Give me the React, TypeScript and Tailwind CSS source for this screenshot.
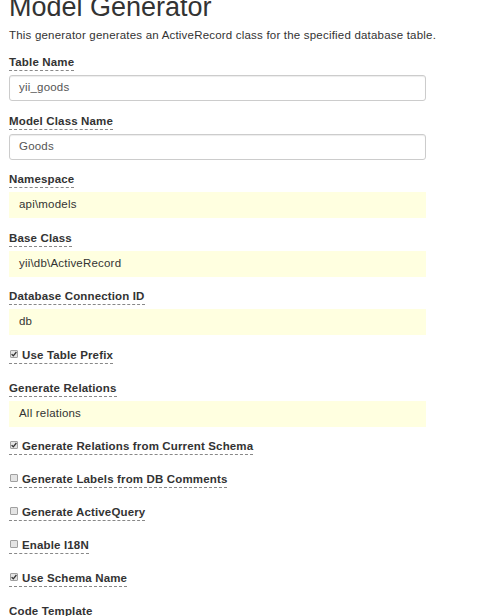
const font = { fontFamily: '"Liberation Sans", Arial, sans-serif' };

type Field =
  | { kind: "input"; label: string; value: string }
  | { kind: "sticky"; label: string; value: string }
  | { kind: "check"; label: string; checked: boolean };

const fields: Field[] = [
  { kind: "input", label: "Table Name", value: "yii_goods" },
  { kind: "input", label: "Model Class Name", value: "Goods" },
  { kind: "sticky", label: "Namespace", value: "api\\models" },
  { kind: "sticky", label: "Base Class", value: "yii\\db\\ActiveRecord" },
  { kind: "sticky", label: "Database Connection ID", value: "db" },
  { kind: "check", label: "Use Table Prefix", checked: true },
  { kind: "sticky", label: "Generate Relations", value: "All relations" },
  { kind: "check", label: "Generate Relations from Current Schema", checked: true },
  { kind: "check", label: "Generate Labels from DB Comments", checked: false },
  { kind: "check", label: "Generate ActiveQuery", checked: false },
  { kind: "check", label: "Enable I18N", checked: false },
  { kind: "check", label: "Use Schema Name", checked: true },
];

function Box({ checked }: { checked: boolean }) {
  return (
    <span className="ml-[1px] mt-[2px] flex h-[8px] w-[8px] shrink-0 items-center justify-center rounded-[1px] border border-[#a0a0a0] bg-[#e4e4e4]">
      {checked && (
        <svg width="6" height="6" viewBox="0 0 6 6">
          <path d="M0.6 3.1 L2.3 4.8 L5.4 1" fill="none" stroke="#333" strokeWidth="1.3" />
        </svg>
      )}
    </span>
  );
}

export default function App() {
  return (
    <div className="h-[616px] w-[499px] overflow-hidden bg-white pl-[9px] text-[#333]" style={font}>
      <h1 className="-mt-[8px] mb-[6px] text-[27px] leading-[30px] font-normal">Model Generator</h1>
      <p className="mb-[12px] text-[11.5px] leading-[15px] tracking-[0.2px]">
        This generator generates an ActiveRecord class for the specified database table.
      </p>

      <div className="flex w-[417px] flex-col">
        {fields.map((f, i) => {
          if (f.kind === "check") {
            return (
              <div key={i} className="mb-[17px] flex">
                <label className="flex items-start gap-[4px] border-b border-dashed border-[#888] text-[11.5px] leading-[15px] font-bold tracking-[0.15px]">
                  <Box checked={f.checked} />
                  <span>{f.label}</span>
                </label>
              </div>
            );
          }
          return (
            <div key={i} className="mb-[12.5px] flex flex-col">
              <div className="mb-[4px] flex">
                <label className="border-b border-dashed border-[#888] text-[11.5px] leading-[15px] font-bold tracking-[0.15px]">
                  {f.label}
                </label>
              </div>
              {f.kind === "input" ? (
                <div className="flex h-[26px] items-center rounded-[3px] border border-[#ccc] pl-[9px] text-[11.5px] tracking-[0.2px] text-[#555] shadow-[inset_0_1px_1px_rgba(0,0,0,0.075)]">
                  {f.value}
                </div>
              ) : (
                <div className="flex h-[26px] items-center bg-[#ffffe0] pl-[10px] text-[11.5px] tracking-[0.2px]">
                  {f.value}
                </div>
              )}
            </div>
          );
        })}
        <div className="text-[11.5px] leading-[15px] font-bold tracking-[0.15px]">Code Template</div>
      </div>
    </div>
  );
}
